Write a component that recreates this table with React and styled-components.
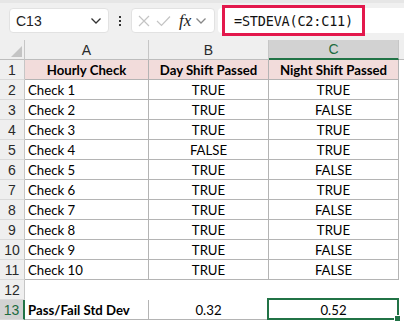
import React from 'react'
import styled, { createGlobalStyle } from 'styled-components'

const GlobalStyle = createGlobalStyle`
  body {
    margin: 0;
    background: #ffffff;
    font-family: Lato, "Liberation Sans", sans-serif;
  }
`

const Page = styled.div`
  width: 404px;
  height: 324px;
  overflow: hidden;
  background: #ffffff;
`

const Toolbar = styled.div`
  height: 40px;
  box-sizing: border-box;
  background: #f0f0f0;
  border-top: 3px solid #e6e6e6;
  display: flex;
  align-items: center;
  padding: 0 0 2px 9px;
`

const NameBox = styled.div`
  width: 100px;
  height: 25px;
  box-sizing: border-box;
  background: #ffffff;
  border: 1px solid #e2e2e2;
  border-radius: 4px;
  display: flex;
  align-items: center;
  justify-content: space-between;
  padding: 0 6px 0 6px;
  font-family: "Liberation Sans", Arial, sans-serif;
  font-size: 14px;
  color: #222;
`

const Dots = styled.div`
  width: 22px;
  display: flex;
  flex-direction: column;
  align-items: center;
  gap: 2px;
`

const Dot = styled.span`
  width: 2px;
  height: 2px;
  background: #333;
`

const FxBox = styled.div`
  width: 84px;
  height: 25px;
  box-sizing: border-box;
  background: #ffffff;
  border: 1px solid #e2e2e2;
  border-radius: 4px;
  display: flex;
  align-items: center;
  padding: 0 4px 0 5px;
  gap: 4px;
`

const Fx = styled.span`
  font-family: "Liberation Serif", "DejaVu Serif", serif;
  font-style: italic;
  font-size: 17px;
  color: #222;
  margin-left: 3px;
`

const FormulaInput = styled.div`
  flex: 1;
  height: 25px;
  margin-left: 3px;
  background: #ffffff;
  border-radius: 4px 0 0 4px;
  display: flex;
  align-items: center;
`

const FormulaText = styled.div`
  margin-left: 4px;
  padding: 0 9px 0 9px;
  height: 31px;
  box-sizing: border-box;
  border: 3px solid #e3184c;
  display: flex;
  align-items: center;
  font-family: "DejaVu Sans Mono", "Liberation Mono", monospace;
  font-size: 13.5px;
  letter-spacing: -0.2px;
  color: #111;
`

const Sheet = styled.div`
  display: grid;
  grid-template-columns: 25px 124px 120px 130px 1fr;
  grid-auto-rows: 20px;
  font-size: 13.2px;
  color: #000;
`

const Corner = styled.div`
  background: #efefef;
  border-right: 1px solid #c6c6c6;
  border-bottom: 1px solid #bdbdbd;
  position: relative;
  &::after {
    content: '';
    position: absolute;
    right: 2px;
    bottom: 2px;
    border-style: solid;
    border-width: 0 0 11px 11px;
    border-color: transparent transparent #c4c4c4 transparent;
  }
`

const ColHead = styled.div`
  background: ${p => (p.$active ? '#d2d2d2' : '#efefef')};
  color: ${p => (p.$active ? '#1d6b3f' : '#2a2a2a')};
  border-right: 1px solid #c6c6c6;
  border-bottom: ${p => (p.$active ? '2px solid #217346' : '1px solid #bdbdbd')};
  display: flex;
  align-items: center;
  justify-content: center;
  font-family: "Liberation Sans", Arial, sans-serif;
  font-size: 14px;
`

const RowHead = styled.div`
  background: ${p => (p.$active ? '#d2d2d2' : '#efefef')};
  color: ${p => (p.$active ? '#1d6b3f' : '#2a2a2a')};
  border-right: ${p => (p.$active ? '2px solid #217346' : '1px solid #c6c6c6')};
  border-bottom: 1px solid #dadada;
  display: flex;
  align-items: center;
  justify-content: center;
  font-family: "Liberation Sans", Arial, sans-serif;
  font-size: 14px;
`

const Cell = styled.div`
  box-sizing: border-box;
  background: ${p => (p.$head ? '#f2dcdb' : '#ffffff')};
  font-weight: ${p => (p.$bold ? 700 : 400)};
  border-right: ${p => (p.$plain ? 'none' : '1px solid #b4b4b4')};
  border-bottom: ${p => (p.$plain ? 'none' : '1px solid #b4b4b4')};
  display: flex;
  align-items: center;
  justify-content: ${p => (p.$left ? 'flex-start' : 'center')};
  padding-left: ${p => (p.$left ? '3px' : '0')};
  white-space: nowrap;
  position: relative;
`

const Selected = styled.div`
  position: absolute;
  left: -2px;
  top: -2px;
  right: -1px;
  bottom: -1px;
  border: 2px solid #217346;
  &::after {
    content: '';
    position: absolute;
    right: -4px;
    bottom: -4px;
    width: 5px;
    height: 5px;
    background: #217346;
    border: 1px solid #fff;
  }
`

const Spare = styled.div`
  background: ${p => (p.$head ? '#efefef' : '#ffffff')};
  border-bottom: ${p => (p.$head ? '1px solid #bdbdbd' : 'none')};
`

const rows = [
  ['Check 1', 'TRUE', 'TRUE'],
  ['Check 2', 'TRUE', 'FALSE'],
  ['Check 3', 'TRUE', 'TRUE'],
  ['Check 4', 'FALSE', 'TRUE'],
  ['Check 5', 'TRUE', 'FALSE'],
  ['Check 6', 'TRUE', 'TRUE'],
  ['Check 7', 'TRUE', 'FALSE'],
  ['Check 8', 'TRUE', 'TRUE'],
  ['Check 9', 'TRUE', 'FALSE'],
  ['Check 10', 'TRUE', 'FALSE'],
]

const Chevron = ({ color = '#333' }) => (
  <svg width='12' height='8' viewBox='0 0 12 8'>
    <path d='M1.5 1.5 L6 6 L10.5 1.5' fill='none' stroke={color} strokeWidth='1.3' />
  </svg>
)

const App = () => (
  <Page>
    <GlobalStyle />
    <Toolbar>
      <NameBox>
        <span>C13</span>
        <Chevron />
      </NameBox>
      <Dots>
        <Dot />
        <Dot />
        <Dot />
      </Dots>
      <FxBox>
        <svg width='14' height='14' viewBox='0 0 14 14'>
          <path d='M2 2 L12 12 M12 2 L2 12' stroke='#c4c4c4' strokeWidth='1.2' />
        </svg>
        <svg width='17' height='14' viewBox='0 0 17 14'>
          <path d='M2 7 L6.5 11.5 L15 2.5' fill='none' stroke='#c4c4c4' strokeWidth='1.2' />
        </svg>
        <Fx>fx</Fx>
        <Chevron color='#888' />
      </FxBox>
      <FormulaInput>
        <FormulaText>=STDEVA(C2:C11)</FormulaText>
      </FormulaInput>
    </Toolbar>
    <Sheet>
      <Corner />
      <ColHead>A</ColHead>
      <ColHead>B</ColHead>
      <ColHead $active>C</ColHead>
      <Spare $head />

      <RowHead>1</RowHead>
      <Cell $head $bold>Hourly Check</Cell>
      <Cell $head $bold>Day Shift Passed</Cell>
      <Cell $head $bold>Night Shift Passed</Cell>
      <Spare />

      {rows.map((r, i) => (
        <React.Fragment key={r[0]}>
          <RowHead>{i + 2}</RowHead>
          <Cell $left>{r[0]}</Cell>
          <Cell>{r[1]}</Cell>
          <Cell>{r[2]}</Cell>
          <Spare />
        </React.Fragment>
      ))}

      <RowHead>12</RowHead>
      <Cell $plain />
      <Cell $plain />
      <Cell $plain />
      <Spare />

      <RowHead $active>13</RowHead>
      <Cell $left $bold>Pass/Fail Std Dev</Cell>
      <Cell>0.32</Cell>
      <Cell>
        0.52
        <Selected />
      </Cell>
      <Spare />
    </Sheet>
  </Page>
)

export default App
